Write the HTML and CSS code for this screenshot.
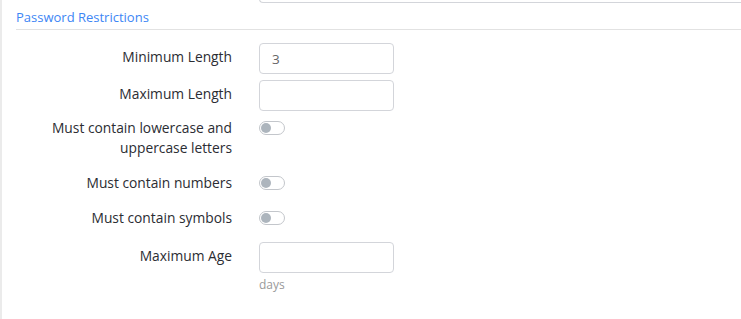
FILE: index.html
```html
<!DOCTYPE html>
<html>
<head>
<meta charset="utf-8">
<link rel="stylesheet" href="styles.css">
</head>
<body>
<div class="page">
  <div class="prev-row">
    <div></div>
    <div class="prev-input"></div>
  </div>
  <h2 class="section-title">Password Restrictions</h2>
  <div class="row row-input">
    <label class="label">Minimum Length</label>
    <div class="control"><input class="input" type="text" value="3"></div>
  </div>
  <div class="row row-input">
    <label class="label">Maximum Length</label>
    <div class="control"><input class="input" type="text" value=""></div>
  </div>
  <div class="row row-switch">
    <label class="label">Must contain lowercase and<br>uppercase letters</label>
    <div class="control"><span class="switch"></span></div>
  </div>
  <div class="row row-switch">
    <label class="label">Must contain numbers</label>
    <div class="control"><span class="switch"></span></div>
  </div>
  <div class="row row-switch">
    <label class="label">Must contain symbols</label>
    <div class="control"><span class="switch"></span></div>
  </div>
  <div class="row row-input row-age">
    <label class="label">Maximum Age</label>
    <div class="control">
      <input class="input" type="text" value="">
      <div class="help">days</div>
    </div>
  </div>
</div>
</body>
</html>
```

FILE: styles.css
```css
html, body {
  margin: 0;
  padding: 0;
  background: #fff;
}
body {
  font-family: "Open Sans", "Noto Sans", sans-serif;
  font-size: 13px;
  color: #2b2d33;
  overflow: hidden;
}
.page {
  height: 319px;
  border-left: 2px solid #ebebeb;
  padding-left: 14px;
  overflow: hidden;
}
.prev-row {
  display: grid;
  grid-template-columns: 216px 1fr;
  column-gap: 27px;
  margin-top: -29px;
}
.prev-input {
  height: 30px;
  border: 1px solid #d3d5da;
  border-right: none;
  border-radius: 4px 0 0 4px;
}
.section-title {
  margin: 0;
  font-size: 13px;
  font-weight: 400;
  color: #3d86f5;
  line-height: 18px;
  padding: 5px 0 3px 0;
  border-bottom: 1px solid #e2e2e2;
}
.row {
  display: grid;
  grid-template-columns: 216px 135px;
  column-gap: 27px;
  align-items: start;
}
.label {
  text-align: right;
  line-height: 19.5px;
  font-size: 13.8px;
}
.row-input {
  margin-top: 6px;
}
.section-title + .row {
  margin-top: 13px;
}
.row-input .label {
  padding-top: 4px;
}
.input {
  box-sizing: border-box;
  width: 135px;
  height: 31px;
  border: 1px solid #d3d5da;
  border-radius: 4px;
  padding: 0 12px;
  font: inherit;
  font-size: 13.5px;
  color: #666;
  display: block;
  outline: none;
}
.row-switch {
  padding-top: 8px;
  padding-bottom: 7.5px;
}
.row-input + .row-switch {
  padding-top: 7px;
}
.row-switch .control {
  padding-top: 3px;
}
.switch {
  display: block;
  box-sizing: border-box;
  width: 26px;
  height: 14px;
  border: 1px solid #c3c6cb;
  border-radius: 7px;
  position: relative;
}
.switch::after {
  content: "";
  position: absolute;
  left: 1px;
  top: 1px;
  width: 10px;
  height: 10px;
  border-radius: 50%;
  background: #adb5bd;
}
.row-switch + .row-age {
  margin-top: 7px;
}
.help {
  font-size: 12px;
  color: #9a9a9a;
  margin-top: 4px;
  line-height: 15px;
}
```
